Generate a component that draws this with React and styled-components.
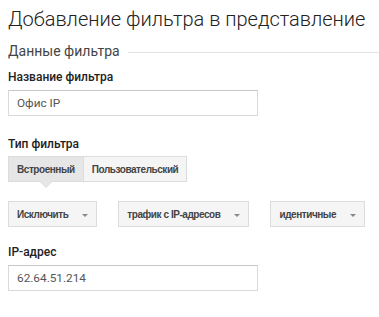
import React from "react";
import styled, { createGlobalStyle } from "styled-components";

const Global = createGlobalStyle`
  html, body { margin: 0; padding: 0; background: #fff; }
  body { font-family: Roboto, "Liberation Sans", Arial, sans-serif; color: #222; }
`;

const Page = styled.div`
  padding: 7px 8px 0;
  display: flex;
  flex-direction: column;
  align-items: flex-start;
`;

const Title = styled.h1`
  margin: 0;
  font-size: 20px;
  line-height: 24px;
  font-weight: 300;
  color: #222;
  white-space: nowrap;
`;

const SectionHeader = styled.div`
  align-self: stretch;
  margin-top: 12px;
  display: flex;
  align-items: center;
  gap: 8px;
  font-size: 14px;
  line-height: 16px;
  color: #444;
  margin-right: -8px;
`;

const Rule = styled.div`
  flex: 1;
  height: 1px;
  background: #e3e3e3;
  margin-top: 2px;
`;

const Label = styled.div`
  margin-top: ${(p) => p.$top}px;
  font-size: 12px;
  line-height: 16px;
  font-weight: 500;
  color: #222;
`;

const TextInput = styled.input`
  margin-top: ${(p) => p.$top || 5}px;
  box-sizing: border-box;
  width: 250px;
  height: 26px;
  border: 1px solid #d9d9d9;
  border-top-color: #c8c8c8;
  padding: 0 8px;
  font-family: Roboto, "Liberation Sans", Arial, sans-serif;
  font-size: 11.8px;
  color: #555;
  outline: none;
  background: #fff;
`;

const Segmented = styled.div`
  margin-top: 4px;
  display: flex;
`;

const SegButton = styled.div`
  position: relative;
  box-sizing: border-box;
  height: 26px;
  padding: 0 8px;
  display: flex;
  align-items: center;
  font-family: "Liberation Sans", Arial, sans-serif;
  font-size: 10px;
  font-weight: 700;
  letter-spacing: -0.45px;
  color: #444;
  border: 1px solid #dcdcdc;
  background: ${(p) => (p.$active ? "#e6e6e6" : "#f5f5f5")};
  & + & { border-left: none; }

  ${(p) =>
    p.$active &&
    `
    &::before, &::after {
      content: "";
      position: absolute;
      left: 50%;
      width: 0;
      height: 0;
      border-left: 6px solid transparent;
      border-right: 6px solid transparent;
    }
    &::before {
      top: 25px;
      margin-left: -6px;
      border-top: 6px solid #dcdcdc;
    }
    &::after {
      top: 24px;
      margin-left: -6px;
      border-top: 6px solid #e6e6e6;
    }
  `}
`;

const SelectRow = styled.div`
  margin-top: 19px;
  display: flex;
  gap: 21px;
`;

const Select = styled.div`
  box-sizing: border-box;
  height: 26px;
  padding: 0 8px;
  display: flex;
  align-items: center;
  gap: 14px;
  font-family: "Liberation Sans", Arial, sans-serif;
  font-size: 10px;
  font-weight: 700;
  letter-spacing: -0.45px;
  color: #444;
  border: 1px solid #dcdcdc;
  background: #f5f5f5;
  white-space: nowrap;
`;

const Caret = styled.span`
  width: 0;
  height: 0;
  border-left: 3px solid transparent;
  border-right: 3px solid transparent;
  border-top: 3px solid #888;
  margin-top: 2px;
`;

export default function App() {
  return (
    <>
      <Global />
      <Page>
        <Title>Добавление фильтра в представление</Title>
        <SectionHeader>
          <span>Данные фильтра</span>
          <Rule />
        </SectionHeader>
        <Label $top={10}>Название фильтра</Label>
        <TextInput defaultValue="Офис IP" />
        <Label $top={20}>Тип фильтра</Label>
        <Segmented>
          <SegButton $active>Встроенный</SegButton>
          <SegButton>Пользовательский</SegButton>
        </Segmented>
        <SelectRow>
          <Select>Исключить<Caret /></Select>
          <Select>трафик с IP-адресов<Caret /></Select>
          <Select>идентичные<Caret /></Select>
        </SelectRow>
        <Label $top={17}>IP-адрес</Label>
        <TextInput defaultValue="62.64.51.214" />
      </Page>
    </>
  );
}
